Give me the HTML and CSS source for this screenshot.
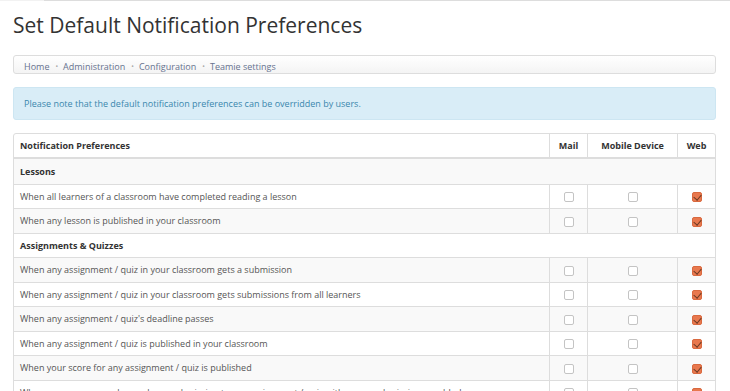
FILE: index.html
```html
<!DOCTYPE html>
<html lang="en">
<head>
    <meta charset="UTF-8">
    <title>Set Default Notification Preferences</title>
    <link rel="stylesheet" href="styles.css">
</head>
<body>
    <div class="topbar"><span></span></div>
    <div class="container">
        <h1>Set Default Notification Preferences</h1>

        <!-- Breadcrumb -->
        <ul class="breadcrumb">
            <li>Home</li>
            <li>Administration</li>
            <li>Configuration</li>
            <li>Teamie settings</li>
        </ul>

        <div class="alert">Please note that the default notification preferences can be overridden by users.</div>

        <!-- Preferences table -->
        <table class="prefs">
            <thead>
                <tr>
                    <th class="label">Notification Preferences</th>
                    <th class="mail">Mail</th>
                    <th class="mobile">Mobile Device</th>
                    <th class="web">Web</th>
                </tr>
            </thead>
            <tbody>
                <tr class="group"><td colspan="4">Lessons</td></tr>
                <tr>
                    <td class="label">When all learners of a classroom have completed reading a lesson</td>
                    <td><span class="check"></span></td>
                    <td><span class="check"></span></td>
                    <td><span class="check on"></span></td>
                </tr>
                <tr>
                    <td class="label">When any lesson is published in your classroom</td>
                    <td><span class="check"></span></td>
                    <td><span class="check"></span></td>
                    <td><span class="check on"></span></td>
                </tr>
                <tr class="group"><td colspan="4">Assignments &amp; Quizzes</td></tr>
                <tr>
                    <td class="label">When any assignment / quiz in your classroom gets a submission</td>
                    <td><span class="check"></span></td>
                    <td><span class="check"></span></td>
                    <td><span class="check on"></span></td>
                </tr>
                <tr>
                    <td class="label">When any assignment / quiz in your classroom gets submissions from all learners</td>
                    <td><span class="check"></span></td>
                    <td><span class="check"></span></td>
                    <td><span class="check on"></span></td>
                </tr>
                <tr>
                    <td class="label">When any assignment / quiz's deadline passes</td>
                    <td><span class="check"></span></td>
                    <td><span class="check"></span></td>
                    <td><span class="check on"></span></td>
                </tr>
                <tr>
                    <td class="label">When any assignment / quiz is published in your classroom</td>
                    <td><span class="check"></span></td>
                    <td><span class="check"></span></td>
                    <td><span class="check on"></span></td>
                </tr>
                <tr>
                    <td class="label">When your score for any assignment / quiz is published</td>
                    <td><span class="check"></span></td>
                    <td><span class="check"></span></td>
                    <td><span class="check on"></span></td>
                </tr>
                <tr>
                    <td class="label">When your group member makes a submission to any assignment / quiz with group submissions enabled</td>
                    <td><span class="check"></span></td>
                    <td><span class="check"></span></td>
                    <td><span class="check on"></span></td>
                </tr>
            </tbody>
        </table>
    </div>
</body>
</html>
```

FILE: styles.css
```css
body { margin: 0; font-family: "Open Sans", Arial, sans-serif; color: #555; background: #fff; }
.topbar { height: 1px; background: #ddd; display: flex; }
.topbar span { width: 44px; background: #f2f2f2; }
.container { padding: 0 14px 0 13px; }

h1 { margin: 10px 0 0; font-size: 21px; font-weight: 400; color: #333; line-height: 28px; }

.breadcrumb { list-style: none; margin: 16px 0 0; padding: 3px 10px 0; height: 14px; display: flex; align-items: center; border: 1px solid #ddd; border-radius: 3px; background: linear-gradient(#fff, #f4f4f4); font-size: 9px; }
.breadcrumb li { color: #66728f; }
.breadcrumb li + li::before { content: "\2022"; color: #aaa; padding: 0 5px 0 6px; font-size: 7px; vertical-align: 1px; }

.alert { margin-top: 13px; padding: 0 10px; height: 31px; display: flex; align-items: center; background: #d9edf7; border: 1px solid #cde6f2; border-radius: 3px; color: #3a87ad; font-size: 9px; }

.prefs { margin-top: 13px; width: 100%; border-collapse: separate; border-spacing: 0; border: 1px solid #ddd; border-radius: 3px; font-size: 9px; table-layout: fixed; }
.prefs th, .prefs td { box-sizing: border-box; padding: 0 6px; height: 24.5px; border-top: 1px solid #ddd; border-left: 1px solid #ddd; text-align: center; white-space: nowrap; overflow: hidden; }
.prefs th { border-top: none; color: #333; font-weight: 700; height: 25px; border-bottom: 2px solid #ddd; }
.prefs tbody tr:first-child td { border-top: none; }
.prefs th.label, .prefs td.label, .prefs .group td { text-align: left; border-left: none; }
.prefs .mail { width: 38px; }
.prefs .mobile { width: 90px; }
.prefs .web { width: 38px; }
.prefs .group td { font-weight: 700; color: #333; }
.prefs tbody tr:nth-child(odd) td { background: #f9f9f9; }

.check { display: inline-block; width: 8px; height: 8px; border: 1px solid #c4c4c4; border-radius: 2px; background: #fff; vertical-align: middle; position: relative; }
.check.on { background: #e8784e; border-color: #d9693f; }
.check.on::after { content: ""; position: absolute; left: 2px; top: 0; width: 4px; height: 6px; border: solid #6b3a24; border-width: 0 1px 1px 0; transform: rotate(40deg); }
```
